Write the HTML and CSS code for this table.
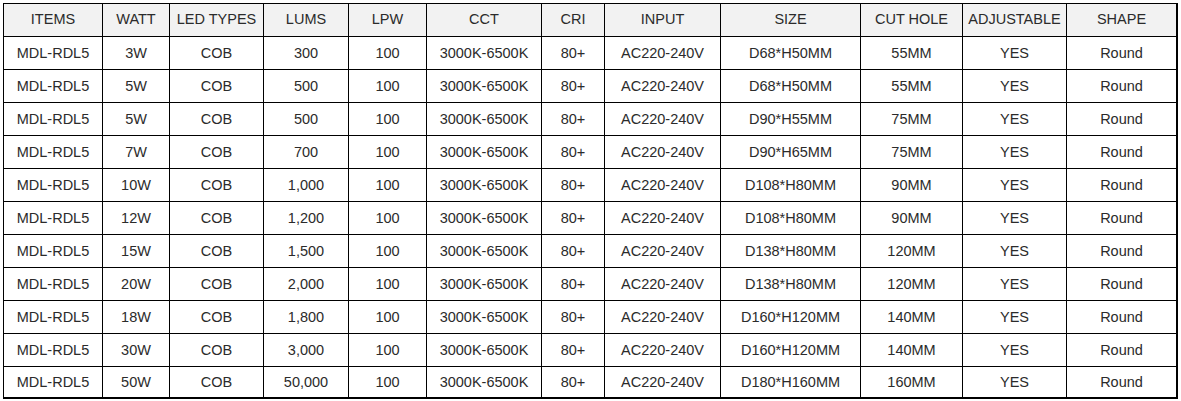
FILE: index.html
```html
<!DOCTYPE html>
<html>
<head>
<meta charset="utf-8">
<link rel="stylesheet" href="styles.css">
</head>
<body>
<table class="spec">
<colgroup>
<col class="c1"><col class="c2"><col class="c3"><col class="c4"><col class="c5"><col class="c6"><col class="c7"><col class="c8"><col class="c9"><col class="c10"><col class="c11"><col class="c12">
</colgroup>
<thead>
<tr><th>ITEMS</th><th>WATT</th><th>LED TYPES</th><th>LUMS</th><th>LPW</th><th>CCT</th><th>CRI</th><th>INPUT</th><th>SIZE</th><th>CUT HOLE</th><th>ADJUSTABLE</th><th>SHAPE</th></tr>
</thead>
<tbody>
<tr><td>MDL-RDL5</td><td>3W</td><td>COB</td><td>300</td><td>100</td><td>3000K-6500K</td><td>80+</td><td>AC220-240V</td><td>D68*H50MM</td><td>55MM</td><td>YES</td><td>Round</td></tr>
<tr><td>MDL-RDL5</td><td>5W</td><td>COB</td><td>500</td><td>100</td><td>3000K-6500K</td><td>80+</td><td>AC220-240V</td><td>D68*H50MM</td><td>55MM</td><td>YES</td><td>Round</td></tr>
<tr><td>MDL-RDL5</td><td>5W</td><td>COB</td><td>500</td><td>100</td><td>3000K-6500K</td><td>80+</td><td>AC220-240V</td><td>D90*H55MM</td><td>75MM</td><td>YES</td><td>Round</td></tr>
<tr><td>MDL-RDL5</td><td>7W</td><td>COB</td><td>700</td><td>100</td><td>3000K-6500K</td><td>80+</td><td>AC220-240V</td><td>D90*H65MM</td><td>75MM</td><td>YES</td><td>Round</td></tr>
<tr><td>MDL-RDL5</td><td>10W</td><td>COB</td><td>1,000</td><td>100</td><td>3000K-6500K</td><td>80+</td><td>AC220-240V</td><td>D108*H80MM</td><td>90MM</td><td>YES</td><td>Round</td></tr>
<tr><td>MDL-RDL5</td><td>12W</td><td>COB</td><td>1,200</td><td>100</td><td>3000K-6500K</td><td>80+</td><td>AC220-240V</td><td>D108*H80MM</td><td>90MM</td><td>YES</td><td>Round</td></tr>
<tr><td>MDL-RDL5</td><td>15W</td><td>COB</td><td>1,500</td><td>100</td><td>3000K-6500K</td><td>80+</td><td>AC220-240V</td><td>D138*H80MM</td><td>120MM</td><td>YES</td><td>Round</td></tr>
<tr><td>MDL-RDL5</td><td>20W</td><td>COB</td><td>2,000</td><td>100</td><td>3000K-6500K</td><td>80+</td><td>AC220-240V</td><td>D138*H80MM</td><td>120MM</td><td>YES</td><td>Round</td></tr>
<tr><td>MDL-RDL5</td><td>18W</td><td>COB</td><td>1,800</td><td>100</td><td>3000K-6500K</td><td>80+</td><td>AC220-240V</td><td>D160*H120MM</td><td>140MM</td><td>YES</td><td>Round</td></tr>
<tr><td>MDL-RDL5</td><td>30W</td><td>COB</td><td>3,000</td><td>100</td><td>3000K-6500K</td><td>80+</td><td>AC220-240V</td><td>D160*H120MM</td><td>140MM</td><td>YES</td><td>Round</td></tr>
<tr><td>MDL-RDL5</td><td>50W</td><td>COB</td><td>50,000</td><td>100</td><td>3000K-6500K</td><td>80+</td><td>AC220-240V</td><td>D180*H160MM</td><td>160MM</td><td>YES</td><td>Round</td></tr>
</tbody>
</table>
</body>
</html>
```

FILE: styles.css
```css
html, body {
  margin: 0;
  padding: 0;
  background: #ffffff;
}
body {
  padding: 3px 0 0 3px;
  font-family: "Liberation Sans", Arial, sans-serif;
  font-size: 14.5px;
  color: #2b2b2b;
}
.spec {
  border-collapse: separate;
  border-spacing: 0;
  table-layout: fixed;
  width: 1175px;
  border-left: 1px solid #000;
  border-top: 1px solid #000;
}
.spec th,
.spec td {
  box-sizing: border-box;
  height: 33px;
  padding: 0;
  text-align: center;
  vertical-align: middle;
  font-weight: normal;
  border-right: 1px solid #000;
  border-bottom: 1px solid #000;
  white-space: nowrap;
  line-height: 16px;
}
.spec th {
  background: #f2f2f2;
  padding-bottom: 3px;
}
.spec th:last-child,
.spec td:last-child {
  border-right-width: 2px;
}
.spec tbody tr:last-child td {
  border-bottom-width: 2px;
  height: 32px;
}
.c1 { width: 99px; }
.c2 { width: 67px; }
.c3 { width: 94px; }
.c4 { width: 85px; }
.c5 { width: 78px; }
.c6 { width: 115px; }
.c7 { width: 63px; }
.c8 { width: 116px; }
.c9 { width: 140px; }
.c10 { width: 102px; }
.c11 { width: 104px; }
.c12 { width: 111px; }
```
